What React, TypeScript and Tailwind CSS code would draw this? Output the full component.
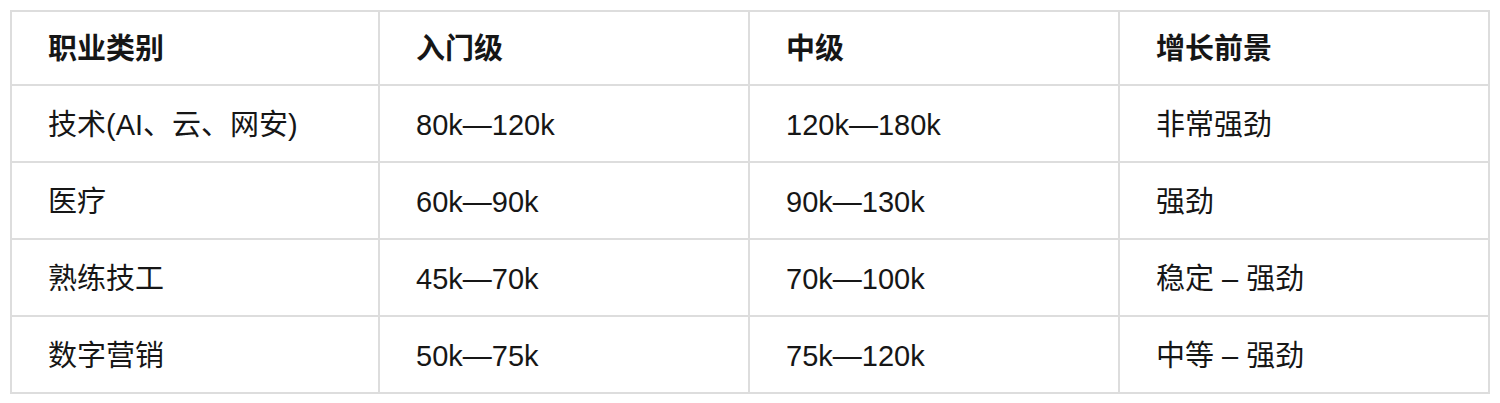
import React from 'react';

const headers = ['职业类别', '入门级', '中级', '增长前景'];

const rows = [
  ['技术(AI、云、网安)', '80k—120k', '120k—180k', '非常强劲'],
  ['医疗', '60k—90k', '90k—130k', '强劲'],
  ['熟练技工', '45k—70k', '70k—100k', '稳定 – 强劲'],
  ['数字营销', '50k—75k', '75k—120k', '中等 – 强劲'],
];

const App: React.FC = () => {
  return (
    <div className="w-[1500px] h-[403px] bg-white p-[10px] font-['Liberation_Sans','Noto_Sans_CJK_SC',sans-serif] text-[29px] text-[#161616]">
      <table className="w-[1480px] table-fixed border-separate border-spacing-0 border-l-2 border-t-2 border-[#dddddd]">
        <colgroup>
          <col className="w-[368px]" />
          <col className="w-[370px]" />
          <col className="w-[370px]" />
          <col className="w-[370px]" />
        </colgroup>
        <thead>
          <tr>
            {headers.map((h) => (
              <th
                key={h}
                className="h-[74px] border-r-2 border-b-2 border-[#dddddd] pl-[36px] pt-[4px] text-left font-bold align-middle"
              >
                {h}
              </th>
            ))}
          </tr>
        </thead>
        <tbody>
          {rows.map((row) => (
            <tr key={row[0]}>
              {row.map((cell, i) => (
                <td
                  key={i}
                  className="h-[77px] border-r-2 border-b-2 border-[#dddddd] pl-[36px] pt-[4px] align-middle"
                >
                  {cell}
                </td>
              ))}
            </tr>
          ))}
        </tbody>
      </table>
    </div>
  );
};

export default App;
